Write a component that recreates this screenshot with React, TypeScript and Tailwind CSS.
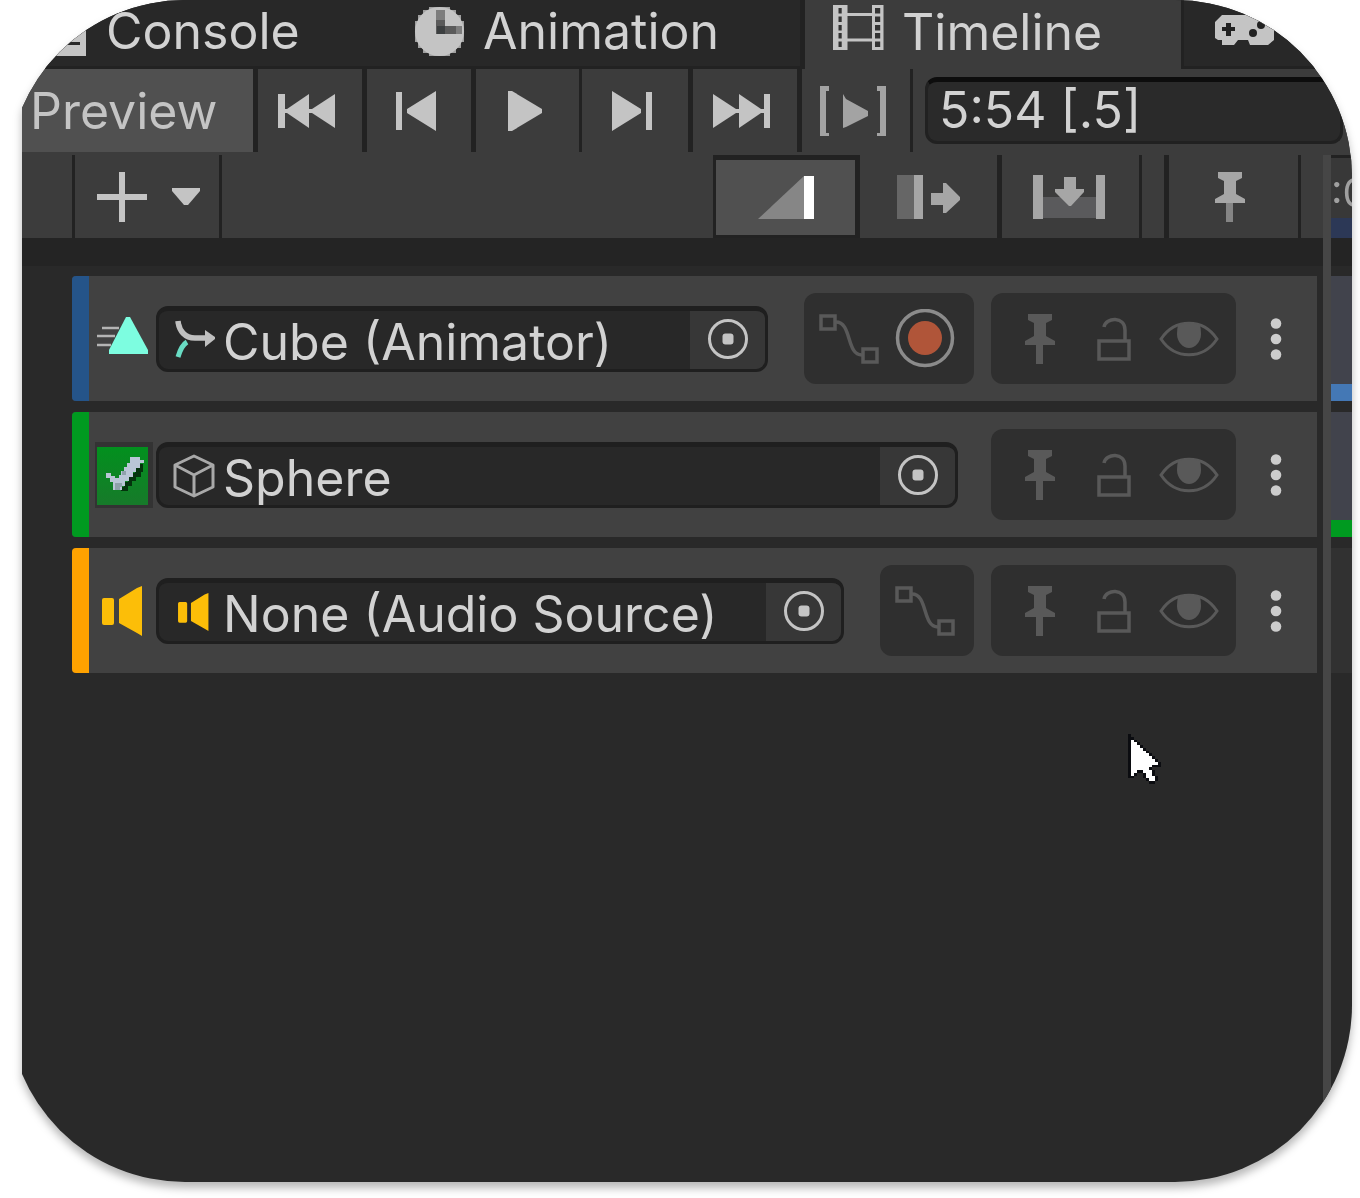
import React from "react";

const ICON = "#c4c4c4";
const DIM = "#595959";

/* ---------- tab icons ---------- */

function ConsoleIcon() {
  return (
    <svg width="48" height="50" viewBox="0 0 48 50" aria-hidden="true">
      <path d="M0 0H48V50H0Z" fill={ICON} />
      <path d="M6 10H42V14H6ZM6 24H42V28H6ZM6 36H42V39H6Z" fill="#282828" />
    </svg>
  );
}

function ClockIcon() {
  return (
    <svg width="51" height="51" viewBox="0 0 51 51" aria-hidden="true">
      <path
        d="M15 1H36V4H42V9H47V15H50V36H47V42H42V47H36V50H15V47H9V42H4V36H1V15H4V9H9V4H15Z"
        fill="#a0a0a0"
      />
      <circle cx="25.5" cy="25.5" r="24.5" fill={ICON} />
      <path d="M22 4H31V20H22Z" fill="#7d7d7d" />
      <path d="M31 20H48V28H31Z" fill="#7d7d7d" />
      <path d="M22 14H31V20H42V28H22Z" fill="#5a5a5a" />
      <path d="M23 20H31V28H23Z" fill="#3c3f40" />
    </svg>
  );
}

function FilmIcon() {
  const holes = [3, 11.5, 20, 28, 36.5];
  return (
    <svg width="51" height="45" viewBox="0 0 51 45" aria-hidden="true">
      <path d="M0 0H14.5V45H0ZM39 0H50.5V45H39ZM14 8H40V11H14ZM14 33.5H40V36.5H14Z" fill={ICON} />
      {holes.map((y) => (
        <g key={y} fill="#333333">
          <rect x="5.5" y={y} width="3.2" height="5.5" />
          <rect x="42" y={y} width="5.2" height="5.5" />
        </g>
      ))}
    </svg>
  );
}

function GamepadIcon() {
  return (
    <svg width="60" height="34" viewBox="0 0 60 34" aria-hidden="true">
      <path d="M8 1H52L58 6L60 14V26L54 31H36L34 26H24L20 31H8V26H4L1 24V8Z" fill={ICON} />
      <path d="M12 9H17V13H21V17H17V22H12V17H8V13H12Z" fill="#222" />
      <circle cx="47" cy="11" r="4" fill="#222" />
      <circle cx="39" cy="19" r="4" fill="#222" />
    </svg>
  );
}

/* ---------- transport icons ---------- */

function FirstFrameIcon() {
  return (
    <svg width="58" height="34" viewBox="0 0 58 34" fill={ICON} aria-hidden="true">
      <path d="M0 0H7V34H0Z" />
      <path d="M6 15H12V19H6ZM31 15H37V19H31Z" />
      <path d="M31 0V34L9 19V15Z" />
      <path d="M57 0V34L34 19V15Z" />
    </svg>
  );
}

function PreviousFrameIcon() {
  return (
    <svg width="42" height="40" viewBox="0 0 42 40" fill={ICON} aria-hidden="true">
      <path d="M1 1H7V39H1ZM41 0V40L12 22V18Z" />
    </svg>
  );
}

function PlayIcon() {
  return (
    <svg width="34" height="40" viewBox="0 0 34 40" fill={ICON} aria-hidden="true">
      <path d="M0 0H4L34 18V22L4 40H0Z" />
    </svg>
  );
}

function NextFrameIcon() {
  return (
    <svg width="42" height="40" viewBox="0 0 42 40" fill={ICON} aria-hidden="true">
      <path d="M1 0V40L30 22V18ZM35 1H41V39H35Z" />
    </svg>
  );
}

function LastFrameIcon() {
  return (
    <svg width="58" height="34" viewBox="0 0 58 34" fill={ICON} aria-hidden="true">
      <path d="M51 0H57V34H51Z" />
      <path d="M46 15H52V19H46ZM21 15H27V19H21Z" />
      <path d="M26 0V34L48 19V15Z" />
      <path d="M0 0V34L23 19V15Z" />
    </svg>
  );
}

function PlayRangeIcon() {
  return (
    <svg width="66" height="50" viewBox="0 0 66 50" fill="#a3a3a3" aria-hidden="true">
      <path d="M0 0H9V5H6V47H9V50H0ZM66 0H57V5H60V47H57V50H66Z" />
      <path d="M23 8L26 13L48 25V30L26 41L23 42Z" />
    </svg>
  );
}

/* ---------- edit mode icons ---------- */

function PlusIcon() {
  return (
    <svg width="50" height="50" viewBox="0 0 50 50" fill={ICON} aria-hidden="true">
      <path d="M22 0H28V22H50V28H28V50H22V28H0V22H22Z" />
    </svg>
  );
}

function CaretIcon() {
  return (
    <svg width="28" height="18" viewBox="0 0 28 18" fill={ICON} aria-hidden="true">
      <path d="M0 0H28V3L16 17H12L0 3Z" />
    </svg>
  );
}

function MixModeIcon() {
  return (
    <svg width="56" height="44" viewBox="0 0 56 44" aria-hidden="true">
      <path d="M0 43L46 0V43Z" fill="#868686" />
      <path d="M46 0H56V43H46Z" fill="#ffffff" />
    </svg>
  );
}

function RippleModeIcon() {
  return (
    <svg width="64" height="44" viewBox="0 0 64 44" aria-hidden="true">
      <path d="M0 0H17V44H0Z" fill="#666666" />
      <path d="M17 0H26V44H17Z" fill="#a6a6a6" />
      <path d="M34 18H46V8H49L63 22V25L49 38H46V30H34Z" fill="#a6a6a6" />
    </svg>
  );
}

function ReplaceModeIcon() {
  return (
    <svg width="74" height="44" viewBox="0 0 74 44" aria-hidden="true">
      <path d="M10 22H64V43H10Z" fill="#5a5a5c" />
      <path d="M1 0H11V44H1ZM64 0H73V44H64Z" fill="#a6a6a6" />
      <path d="M32 2H44V14H52V17L39 31H37L23 17V14H32Z" fill="#a6a6a6" />
    </svg>
  );
}

function PinIcon({ color, stem }: { color: string; stem: string }) {
  return (
    <svg width="32" height="50" viewBox="0 0 32 50" fill={color} aria-hidden="true">
      <path d="M12 30H19V50H12Z" fill={stem} />
      <path d="M4 0H28V6L22 9V22L31 27V31H1V27L10 22V9L4 6Z" />
    </svg>
  );
}

/* ---------- track icons ---------- */

function AnimationTrackIcon() {
  return (
    <svg width="52" height="50" viewBox="0 0 52 50" aria-hidden="true">
      <path d="M5 14H22M0 22H18M0 31H14" stroke="#b4b4b4" strokeWidth="2.5" />
      <path d="M29 3H33L51 36V40H12V36Z" fill="#7dfde0" />
    </svg>
  );
}

function ActivationTrackIcon() {
  return (
    <svg width="58" height="66" viewBox="0 0 58 66" aria-hidden="true">
      <defs>
        <linearGradient id="activation" x1="0" y1="0" x2="0" y2="1">
          <stop offset="0" stopColor="#02901e" />
          <stop offset="1" stopColor="#177a2a" />
        </linearGradient>
      </defs>
      <path d="M0 0H58V66H0Z" fill="#333333" />
      <path d="M2 5H53V63H2Z" fill="url(#activation)" />
      <path d="M48 22V30H46V35H41V39H37V44H33V49H26V45H29V40H33V35H37V31H40V26H44V22Z" fill="#04330d" />
      <path
        d="M11 31H16V34H20V36H24V33H26V29H29V25H32V21H35V15H45V18H49V21H45V26H41V30H38V35H34V39H30V44H27V48H18V40H15V36H11Z"
        fill="#b9c6d6"
      />
      <path d="M20 41H27V45H25V48H20ZM27 29H31V33H27Z" fill="#8fa1ab" />
    </svg>
  );
}

function SpeakerIcon({ large }: { large?: boolean }) {
  return (
    <svg
      width={large ? 52 : 42}
      height={large ? 50 : 38}
      viewBox="0 0 52 50"
      fill="#fcbe08"
      aria-hidden="true"
    >
      <rect x="5" y="12" width="12" height="27" rx="2" />
      <path d="M22 13L40 2L45 0V50L40 47L22 37Z" />
    </svg>
  );
}

function AnimatorIcon() {
  return (
    <svg width="42" height="42" viewBox="0 0 42 42" fill="none" aria-hidden="true">
      <path d="M5 2C6 12 12 19 22 19H33" stroke="#c0c0c0" strokeWidth="5.5" />
      <path d="M32 11L42 18V20L32 28Z" fill="#c0c0c0" />
      <path d="M14 23C9 26 7 31 5 38" stroke="#69dcc4" strokeWidth="5" />
    </svg>
  );
}

function CubeIcon() {
  return (
    <svg
      width="42"
      height="44"
      viewBox="0 0 42 44"
      fill="none"
      stroke="#a9a9a9"
      strokeWidth="3"
      strokeLinejoin="round"
      aria-hidden="true"
    >
      <path d="M21 2L40 11V33L21 42L2 33V11ZM2 11L21 21L40 11M21 21V42" />
    </svg>
  );
}

function PickerIcon() {
  return (
    <svg width="42" height="42" viewBox="0 0 42 42" aria-hidden="true">
      <circle cx="21" cy="20" r="18.5" fill="none" stroke={ICON} strokeWidth="3" />
      <rect x="15.5" y="14.5" width="11" height="11" rx="3" fill={ICON} />
    </svg>
  );
}

function CurvesIcon() {
  return (
    <svg width="60" height="50" viewBox="0 0 60 50" fill="none" stroke={DIM} aria-hidden="true">
      <path d="M2 2H16V15H2ZM44 35H58V48H44Z" strokeWidth="3.5" />
      <path d="M17 8C33 8 27 41 43 41" strokeWidth="3.5" />
    </svg>
  );
}

function RecordIcon() {
  return (
    <svg width="60" height="60" viewBox="0 0 60 60" aria-hidden="true">
      <circle cx="30" cy="29" r="27.5" fill="none" stroke="#8b8b8b" strokeWidth="3.5" />
      <circle cx="30" cy="29" r="17" fill="#b05539" />
    </svg>
  );
}

function LockIcon() {
  return (
    <svg width="34" height="50" viewBox="0 0 34 50" fill="none" stroke={DIM} strokeWidth="3.5" aria-hidden="true">
      <path d="M2 27H32V45H2Z" />
      <path d="M7 13C9 3 28 2 28 16V27" />
    </svg>
  );
}

function EyeIcon() {
  return (
    <svg width="60" height="36" viewBox="0 0 60 36" aria-hidden="true">
      <path d="M2 18C16 -3 44 -3 58 18C44 39 16 39 2 18Z" fill="none" stroke={DIM} strokeWidth="3" />
      <path d="M19 4Q30 0 41 4Q42 8 42 13C42 21 36 27 30 27S18 21 18 13Q18 8 19 4Z" fill={DIM} />
    </svg>
  );
}

function MoreIcon() {
  return (
    <svg width="12" height="42" viewBox="0 0 12 42" fill="#cccccc" aria-hidden="true">
      <circle cx="6" cy="5.5" r="5.3" />
      <circle cx="6" cy="21" r="5.3" />
      <circle cx="6" cy="36.5" r="5.3" />
    </svg>
  );
}

const CURSOR = [
  "#..........",
  "##.........",
  "#o#........",
  "#oo#.......",
  "#ooo#......",
  "#oooo#.....",
  "#ooooo#....",
  "#oooooo#...",
  "#ooooooo#..",
  "#oooooooo#.",
  "#ooooooooo#",
  "#ooooooo###",
  "#oooooo#...",
  "#oo##ooo#..",
  "#o#..#oo#..",
  "##...#ooo#.",
  "......#oo#.",
  ".......##..",
];

function Cursor() {
  return (
    <svg
      className="pointer-events-none absolute left-[1120px] top-[734px]"
      width="33"
      height="50"
      viewBox="0 0 11 18"
      preserveAspectRatio="none"
      shapeRendering="crispEdges"
      aria-hidden="true"
    >
      {CURSOR.flatMap((row, y) =>
        row
          .split("")
          .map((c, x) =>
            c === "." ? null : (
              <rect key={`${x}-${y}`} x={x} y={y} width="1" height="1" fill={c === "#" ? "#0b0c10" : "#ffffff"} />
            ),
          ),
      )}
    </svg>
  );
}

/* ---------- sections ---------- */

function TabBar() {
  return (
    <div role="tablist" className="flex h-[69px] bg-[#282828] pl-[14px] text-[#d2d2d2]">
      <button role="tab" className="flex w-[376px] shrink-0 items-center gap-5 border-b-[3px] border-[#222222] pb-1 pl-4">
        <ConsoleIcon />
        Console
      </button>
      <button role="tab" className="flex w-[407px] shrink-0 items-center gap-[18px] border-b-[3px] border-r-[5px] border-[#222222] pb-1 pl-4">
        <ClockIcon />
        Animation
      </button>
      <button role="tab" aria-selected="true" className="flex w-[376px] shrink-0 items-center gap-[18px] bg-[#3c3c3c] pb-[6px] pl-7">
        <span className="pb-2">
          <FilmIcon />
        </span>
        Timeline
      </button>
      <button role="tab" className="flex min-w-0 flex-1 items-center gap-3 overflow-hidden border-b-[3px] border-l-[3px] border-[#222222] pb-1 pl-[30px]">
        <span className="shrink-0">
          <GamepadIcon />
        </span>
        Game
      </button>
    </div>
  );
}

const TRANSPORT = [
  { label: "Go to start", icon: <FirstFrameIcon />, size: "w-[109px] border-r-[5px]" },
  { label: "Previous frame", icon: <PreviousFrameIcon />, size: "w-[109px] border-r-[5px]" },
  { label: "Play", icon: <PlayIcon />, size: "w-[106px] border-r-[3px]" },
  { label: "Next frame", icon: <NextFrameIcon />, size: "w-[111px] border-r-[5px]" },
  { label: "Go to end", icon: <LastFrameIcon />, size: "w-[109px] border-r-[5px]" },
  { label: "Play range", icon: <PlayRangeIcon />, size: "w-[111px] border-r-[3px]" },
];

function TransportBar() {
  return (
    <div className="flex h-[83px] bg-[#3c3c3c] pl-[14px]">
      <button className="w-[236px] shrink-0 border-r-[5px] border-[#222222] bg-[#505050] pl-2 text-left text-[#c4c4c4]">
        Preview
      </button>
      {TRANSPORT.map((b) => (
        <button
          key={b.label}
          aria-label={b.label}
          className={`flex shrink-0 items-center justify-center border-[#222222] pr-[6px] ${b.size}`}
        >
          {b.icon}
        </button>
      ))}
      <input
        aria-label="Current time"
        defaultValue="5:54 [.5]"
        className="my-2 ml-3 mr-[9px] min-w-0 flex-1 rounded-xl border-[3px] border-t-[5px] border-[#212121] border-t-[#0d0d0d] bg-[#2a2a2a] pb-1 pl-[11px] text-[#d2d2d2] outline-none"
      />
    </div>
  );
}

function EditBar() {
  return (
    <div className="flex h-[83px] bg-[#3c3c3c] pl-[14px]">
      <div className="w-[50px] shrink-0" />
      <button aria-label="Add track" className="flex w-[150px] shrink-0 items-center gap-[25px] border-x-[3px] border-[#222222] pl-[22px]">
        <PlusIcon />
        <CaretIcon />
      </button>
      <div className="flex-1" />
      <button
        aria-label="Mix mode"
        aria-pressed="true"
        className="flex w-[147px] items-center justify-center border-b-[3px] border-l-[3px] border-r-[5px] border-t-[5px] border-[#222222] bg-[#505050]"
      >
        <MixModeIcon />
      </button>
      <button aria-label="Ripple mode" className="flex w-[142px] items-center justify-center border-r-[5px] border-[#222222]">
        <RippleModeIcon />
      </button>
      <button aria-label="Replace mode" className="flex w-[140px] items-center justify-center border-r-[3px] border-[#222222] pr-1">
        <ReplaceModeIcon />
      </button>
      <div className="w-[27px] border-r-[5px] border-[#222222]" />
      <button aria-label="Show markers" className="flex w-[132px] items-center justify-center border-r-[3px] border-[#222222] pr-2">
        <PinIcon color="#a6a6a6" stem="#858585" />
      </button>
      <div className="w-[22px]" />
    </div>
  );
}

type TrackData = {
  name: string;
  bar: string;
  trackIcon: React.ReactNode;
  iconBox: string;
  fieldIcon: React.ReactNode;
  curves: boolean;
  record: boolean;
};

const TRACKS: TrackData[] = [
  {
    name: "Cube (Animator)",
    bar: "bg-[#255489]",
    trackIcon: <AnimationTrackIcon />,
    iconBox: "pl-2",
    fieldIcon: <AnimatorIcon />,
    curves: true,
    record: true,
  },
  {
    name: "Sphere",
    bar: "bg-[#009a20]",
    trackIcon: <ActivationTrackIcon />,
    iconBox: "pl-[6px]",
    fieldIcon: <CubeIcon />,
    curves: false,
    record: false,
  },
  {
    name: "None (Audio Source)",
    bar: "bg-[#ffa200]",
    trackIcon: <SpeakerIcon large />,
    iconBox: "pl-2",
    fieldIcon: <SpeakerIcon />,
    curves: true,
    record: false,
  },
];

function Track({ track }: { track: TrackData }) {
  return (
    <li className="flex h-[125px] items-center overflow-hidden rounded-l bg-[#414141]">
      <div className={`w-[17px] shrink-0 self-stretch ${track.bar}`} />
      <div className={`w-[67px] shrink-0 ${track.iconBox}`}>{track.trackIcon}</div>
      <div className="mr-4 flex h-[66px] min-w-0 flex-1 overflow-hidden rounded-xl border-[3px] border-t-[5px] border-[#1f1f1f] bg-[#282828]">
        <button className="flex min-w-0 flex-1 items-center gap-2 whitespace-nowrap pl-[14px] text-[#d2d2d2]">
          <span className="shrink-0">{track.fieldIcon}</span>
          <span className="pt-1">{track.name}</span>
        </button>
        <button
          aria-label={`Pick object for ${track.name}`}
          className="flex w-[75px] shrink-0 items-center justify-center bg-[#373737]"
        >
          <PickerIcon />
        </button>
      </div>
      {track.curves && (
        <div className="ml-5 mr-[17px] flex h-[91px] shrink-0 items-center gap-4 rounded-xl bg-[#2f2f2f] pl-[15px] pr-[19px]">
          <button aria-label="Show curves">
            <CurvesIcon />
          </button>
          {track.record && (
            <button aria-label="Record">
              <RecordIcon />
            </button>
          )}
        </div>
      )}
      <div
        className={`flex h-[91px] w-[245px] shrink-0 items-center rounded-xl bg-[#2f2f2f] pl-[33px] ${
          track.curves ? "" : "ml-[17px]"
        }`}
      >
        <button aria-label="Pin">
          <PinIcon color={DIM} stem={DIM} />
        </button>
        <button aria-label="Lock" className="ml-[41px]">
          <LockIcon />
        </button>
        <button aria-label="Visibility" className="ml-7">
          <EyeIcon />
        </button>
      </div>
      <button aria-label="Track options" className="flex w-[81px] shrink-0 justify-center pr-[2px]">
        <MoreIcon />
      </button>
    </li>
  );
}

function ClipArea() {
  return (
    <div className="flex w-[21px] shrink-0 flex-col overflow-hidden">
      <div className="h-[63px] overflow-hidden border-t-[3px] border-[#222222] bg-[#383838] text-[40px] leading-[70px] text-[#a0a0a0]">
        :00
      </div>
      <div className="h-5 bg-[#2c3856]" />
      <div className="h-7 bg-[#242424]" />
      <div className="flex flex-col gap-[11px] pt-[10px]">
        <div className="h-[125px] border-b-[17px] border-[#4478b5] bg-[#41434c]" />
        <div className="h-[125px] border-b-[17px] border-[#009a20] bg-[#41434c]" />
        <div className="h-[125px] bg-[#313131]" />
      </div>
    </div>
  );
}

export default function App() {
  return (
    <div className="flex min-h-screen flex-col pb-4 font-['Inter',sans-serif] text-[50px] leading-none [filter:drop-shadow(0_6px_4px_rgba(0,0,0,0.28))]">
      <main className="ml-[22px] mr-2 flex flex-1 flex-col overflow-hidden">
        <div className="relative -ml-[14px] flex flex-1 flex-col overflow-hidden rounded-[177px] bg-[#292929]">
          <TabBar />
          <TransportBar />
          <div className="h-[3px] bg-[#3c3c3c]" />
          <div className="flex flex-1">
            <section className="min-w-0 flex-1">
              <EditBar />
              <div className="h-7 bg-[#242424]" />
              <ul className="flex flex-col gap-[11px] pl-16 pr-[6px] pt-[10px]">
                {TRACKS.map((t) => (
                  <Track key={t.name} track={t} />
                ))}
              </ul>
            </section>
            <div className="w-2 shrink-0 bg-[#464646]" />
            <ClipArea />
          </div>
          <Cursor />
        </div>
      </main>
    </div>
  );
}
